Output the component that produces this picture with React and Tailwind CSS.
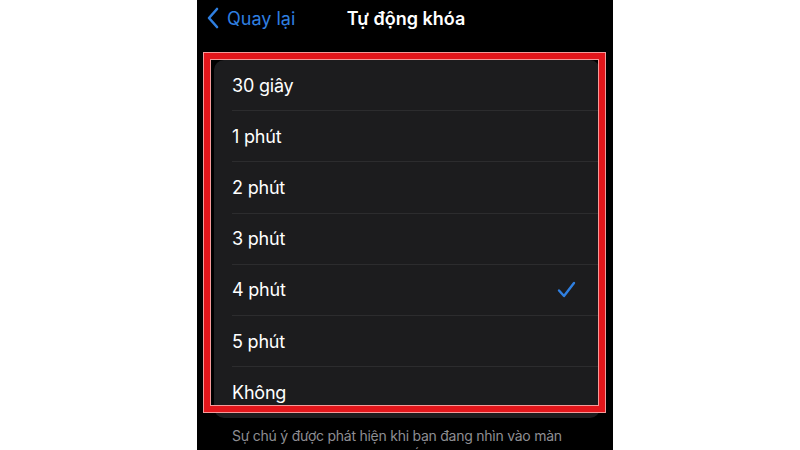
import React from 'react';

const options = ['30 giây', '1 phút', '2 phút', '3 phút', '4 phút', '5 phút', 'Không'];
const selected = '4 phút';

function Check() {
  return (
    <svg width="19" height="17" viewBox="0 0 19 17" fill="none">
      <path d="M2 9.5 L7 15 L17 2" stroke="#2f7fe0" strokeWidth="2.4" strokeLinecap="round" strokeLinejoin="round" />
    </svg>
  );
}

export default function App() {
  return (
    <div className="h-[450px] w-[800px] overflow-hidden bg-white" style={{ fontFamily: 'Inter, "Noto Sans", sans-serif' }}>
      <div className="relative ml-[197px] h-full w-[416px] bg-black">
        {/* nav bar */}
        <div className="relative flex h-[36px] items-center">
          <div className="flex items-center pl-[9px] text-[#2f7fe0]">
            <svg width="14" height="22" viewBox="0 0 14 22" fill="none">
              <path d="M11 2 L3 11 L11 20" stroke="#2f7fe0" strokeWidth="2.6" strokeLinecap="round" strokeLinejoin="round" />
            </svg>
            <span className="ml-[7px] text-[18px]">Quay lại</span>
          </div>
          <span className="absolute left-0 right-0 text-center text-[18px] font-semibold text-white pl-[2px]">Tự động khóa</span>
        </div>

        {/* options list */}
        <div className="mt-[24px] ml-[17px] mr-[13px] overflow-hidden rounded-[10px] bg-[#1c1c1e]">
          {options.map((o, i) => (
            <div key={o} className="flex h-[51.2px] items-stretch pl-[18px]">
              <div className={`flex flex-1 items-center justify-between pr-[24px] ${i < options.length - 1 ? 'border-b border-[#2c2c2e]' : ''}`}>
                <span className="text-[18px] tracking-[-0.2px] text-white">{o}</span>
                {o === selected && <Check />}
              </div>
            </div>
          ))}
        </div>

        <p className="mt-[8px] px-[35px] text-[14px] leading-[20px] tracking-[-0.25px] text-[#8e8e93]">
          Sự chú ý được phát hiện khi bạn đang nhìn vào màn hình, màn hình sẽ không bị tối đi hoặc khóa.
        </p>

        {/* highlight frame */}
        <div className="pointer-events-none absolute left-[7px] top-[53px] h-[359px] w-[401px] border-[6px] border-[#e3161b] shadow-[0_0_0_1px_#f59a9a,inset_0_0_0_1px_#f59a9a]" />
      </div>
    </div>
  );
}
